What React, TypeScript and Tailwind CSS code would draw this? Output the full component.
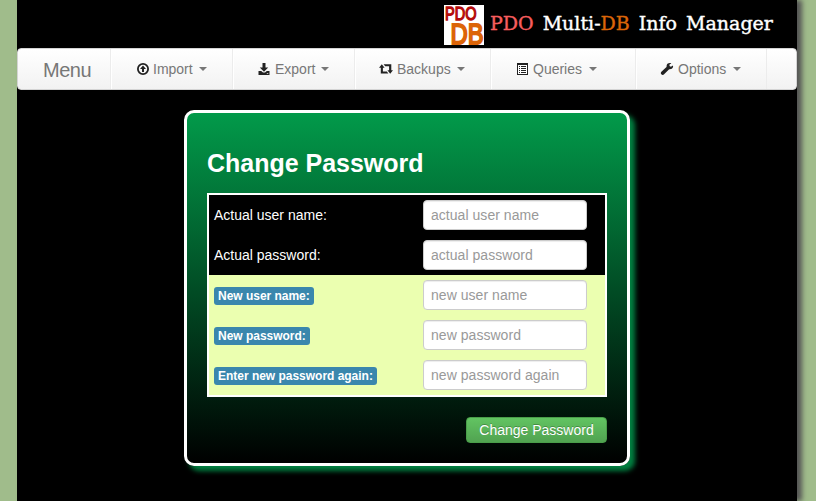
import React from "react";

const ImportIcon = () => (
  <svg width="14" height="14" viewBox="0 0 14 14" className="shrink-0">
    <circle cx="7" cy="7" r="5.1" fill="none" stroke="#222" strokeWidth="1.8" />
    <path d="M7 3.6 10 7H8v3H6V7H4z" fill="#222" />
  </svg>
);

const ExportIcon = () => (
  <svg width="14" height="14" viewBox="0 0 14 14" className="shrink-0" fill="#222">
    <path d="M5.500 1h3v4.500h2.700L7 9.700 2.800 5.500h2.700z" />
    <path d="M1.500 9h2.700L6 10.600h2L9.800 9h2.700v4h-11z" />
    <path d="M9.800 11h1.500v.7H9.800z" fill="#fff" />
  </svg>
);

const BackupsIcon = () => (
  <svg width="14" height="14" viewBox="0 0 14 14" className="shrink-0" fill="#222">
    <path d="M2.800 2.300 5.600 5.700H3.900v3.900h3.900L9.400 11.600H1.800V5.700H0z" />
    <path d="M4.600 2.300h7.700v6H14l-2.800 3.400-2.800-3.400h1.700V4.300H6.200z" />
  </svg>
);

const QueriesIcon = () => (
  <svg width="14" height="14" viewBox="0 0 14 14" className="shrink-0" shapeRendering="crispEdges">
    <path d="M2 1h11v12H2z" fill="#222" />
    <path d="M3 3h9v9H3z" fill="#fff" />
    <path d="M4 4h1v1H4zM6 4h5v1H6zM4 6h1v1H4zM6 6h5v1H6zM4 8h1v1H4zM6 8h5v1H6zM4 10h1v1H4zM6 10h5v1H6z" fill="#222" />
  </svg>
);

const OptionsIcon = () => (
  <svg width="14" height="14" viewBox="0 0 14 14" className="shrink-0" fill="#222">
    <path d="M12.900 3.500 10.900 4.700 9.500 4.100 9.500 2.600 11.400 1.300C9.500.5 7.100 1.200 6.700 3.200c-.2.9 0 1.500-.2 1.800L1.400 9.800c-1.800 1.800.9 4.300 2.700 2.500l4.800-4.900c.6-.4 1.300-.1 2-.3 1.800-.4 2.600-2.100 2-3.600z" />
  </svg>
);

const menus = [
  { label: "Import", icon: <ImportIcon />, cls: "w-[122px] pl-[25px]", gap: "gap-[3px]", caret: "ml-[3px]" },
  { label: "Export", icon: <ExportIcon />, cls: "w-[122px] pl-[24px]", gap: "gap-[4px]", caret: "ml-[2px]" },
  { label: "Backups", icon: <BackupsIcon />, cls: "w-[136px] pl-[24px]", gap: "gap-[4px]", caret: "ml-[2px]" },
  { label: "Queries", icon: <QueriesIcon />, cls: "w-[145px] pl-[24px]", gap: "gap-[4px]", caret: "ml-[3px]" },
  { label: "Options", icon: <OptionsIcon />, cls: "w-[131px] pl-[24px]", gap: "gap-[4px]", caret: "ml-[3px]" },
];

const currentFields = [
  { label: "Actual user name:", placeholder: "actual user name" },
  { label: "Actual password:", placeholder: "actual password" },
];

const newFields = [
  { label: "New user name:", placeholder: "new user name" },
  { label: "New password:", placeholder: "new password" },
  { label: "Enter new password again:", placeholder: "new password again" },
];

const Field = ({ placeholder }: { placeholder: string }) => (
  <input
    placeholder={placeholder}
    className="h-[30px] w-[164px] rounded-[4px] border border-[#ccc] bg-white px-[7px] text-[14px] tracking-[0.04px] text-[#555] shadow-[inset_0_1px_1px_rgba(0,0,0,0.075)] outline-none placeholder:text-[#999]"
  />
);

export default function App() {
  return (
    <div className="h-[501px] w-[816px] overflow-hidden bg-[#a0bc8b] pl-[17px] font-['Liberation_Sans',Arial,sans-serif] text-[14px] leading-5">
      <main className="h-full w-[780px] bg-black shadow-[5px_0_5px_#555]">
        <header className="flex h-[48px] pl-[427px] pt-[5px]">
          <svg width="40" height="40" viewBox="0 0 40 40" className="shrink-0 overflow-visible">
            <rect width="40" height="40" fill="#fff" />
            <text x="1" y="15" fontSize="18.500" textLength="31.500" lengthAdjust="spacingAndGlyphs" fill="#b50b0b" stroke="#b50b0b" strokeWidth="1.300" fontFamily="Liberation Sans, sans-serif">PDO</text>
            <text x="6.500" y="38.500" fontSize="30" textLength="33" lengthAdjust="spacingAndGlyphs" fill="#dc6408" stroke="#dc6408" strokeWidth="2" fontFamily="Liberation Sans, sans-serif">DB</text>
          </svg>
          <h1 className="whitespace-nowrap pl-[6px] pt-[6px] font-['DejaVu_Serif',serif] text-[19px] leading-6 text-white [-webkit-text-stroke-width:0.4px] [word-spacing:3px]">
            <span className="text-[#f75d5d]">PDO</span> Multi-<span className="text-[#db6508]">DB</span> Info Manager
          </h1>
        </header>

        <nav className="flex h-[42px] rounded-[4px] border border-[#d4d4d4] bg-linear-to-b/srgb from-white to-[#f2f2f2] text-[#777]">
          <div className="w-[93px] border-r border-[#ececec] pl-[25px] pt-[11px] text-[20px] tracking-[-0.5px]">Menu</div>
          {menus.map((m) => (
            <div key={m.label} className={`flex items-center border-r border-[#ececec] shadow-[inset_1px_0_#fff] ${m.cls} ${m.gap}`}>
              {m.icon}
              <span>{m.label}</span>
              <span className={`border-x-4 border-t-4 border-x-transparent border-t-[#777] ${m.caret}`} />
            </div>
          ))}
        </nav>

        <section className="ml-[167px] mt-[20px] h-[356px] w-[446px] rounded-[10px] border-[3px] border-white bg-linear-to-b/srgb from-[#029a4a] to-black px-[20px] pt-[30px] shadow-[5px_5px_5px_#008040]">
          <h2 className="h-[50px] pt-[5px] text-[25px] font-bold leading-[30px] tracking-[-0.02px] text-white">Change Password</h2>
          <div className="w-[400px] border-2 border-white">
            <div className="bg-black text-white">
              {currentFields.map((f) => (
                <label key={f.label} className="flex h-[40px] items-center pl-[5px]">
                  <span className="w-[209px]">{f.label}</span>
                  <Field placeholder={f.placeholder} />
                </label>
              ))}
            </div>
            <div className="bg-[#ebffb0]">
              {newFields.map((f) => (
                <label key={f.label} className="flex h-[40px] items-center pl-[5px]">
                  <span className="w-[209px] pt-px">
                    <span className="block w-fit rounded-[3px] bg-[#3a87ad] px-[4px] py-[2px] text-[12px] font-bold leading-[14px] tracking-[-0.02px] text-white">
                      {f.label}
                    </span>
                  </span>
                  <Field placeholder={f.placeholder} />
                </label>
              ))}
            </div>
          </div>
          <div className="flex justify-end pt-[20px]">
            <button className="h-[26px] w-[141px] rounded-[4px] border border-[#4a9e4a] bg-linear-to-b/srgb from-[#62c462] to-[#51a351] text-[14px] leading-6 text-white [text-shadow:0_-1px_0_rgba(0,0,0,0.25)]">
              Change Password
            </button>
          </div>
        </section>
      </main>
    </div>
  );
}
